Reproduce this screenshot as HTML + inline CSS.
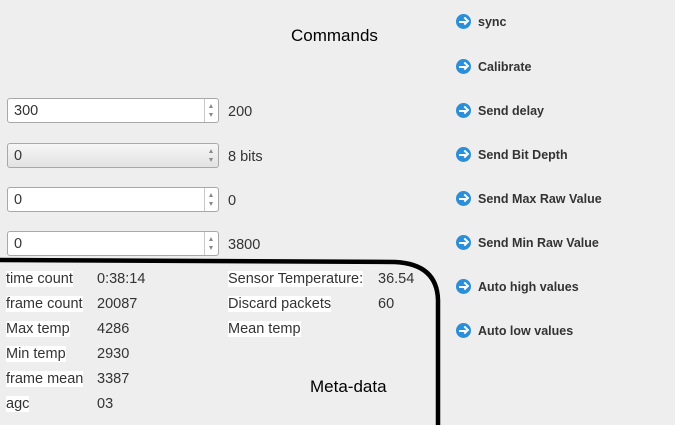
<!DOCTYPE html>
<html><head><style>
body{margin:0;width:675px;height:425px;background:#eeeeee;position:relative;overflow:hidden;font-family:"Liberation Sans","DejaVu Sans",sans-serif;color:#333;}
.a{position:absolute;white-space:nowrap}
.sb{position:absolute;left:7px;width:210px;height:23px;border:1px solid #a8a8a8;border-radius:3px;background:#fff;}
.sb.c{background:linear-gradient(#f6f6f6,#e2e2e2);}
.sb span{position:absolute;left:6px;top:4px;font-size:14.5px;color:#333}
.sb .btn{position:absolute;right:0;top:0;width:13px;height:23px;border-left:1px solid #c8c8c8;}
.sb.c .btn{border-left:none}
.btn:before{content:"";position:absolute;left:4px;top:5px;border:2.5px solid transparent;border-bottom:4px solid #888;border-top:0}
.btn:after{content:"";position:absolute;left:4px;top:14px;border:2.5px solid transparent;border-top:4px solid #888;border-bottom:0}
.v{font-size:14.5px;position:absolute;left:228px}
.r{position:absolute;left:456px;font-size:12.5px;font-weight:bold;color:#333}
.r i{display:inline-block;width:15px;height:15px;border-radius:50%;background:#2a8fd8;vertical-align:middle;position:relative;margin-right:7px;top:-1px}
.r i:before{content:"";position:absolute;left:3px;top:6.5px;width:7px;height:2px;background:#fff}
.r i:after{content:"";position:absolute;left:6px;top:4px;width:4px;height:4px;border-top:2px solid #fff;border-right:2px solid #fff;transform:rotate(45deg)}
.m{position:absolute;font-size:14.5px;white-space:nowrap}
.m b{font-weight:normal;background:#fff}
</style></head><body>
<div class="a" style="left:291px;top:26px;font-size:17px;color:#000">Commands</div>
<div class="sb" style="top:98px"><span>300</span><div class="btn"></div></div><div class="v" style="top:104px">200</div>
<div class="sb c" style="top:143px"><span>0</span><div class="btn"></div></div><div class="v" style="top:149px">8 bits</div>
<div class="sb" style="top:187px"><span>0</span><div class="btn"></div></div><div class="v" style="top:193px">0</div>
<div class="sb" style="top:231px"><span>0</span><div class="btn"></div></div><div class="v" style="top:237px">3800</div>

<div class="r" style="top:15px"><i></i>sync</div>
<div class="r" style="top:60px"><i></i>Calibrate</div>
<div class="r" style="top:104px"><i></i>Send delay</div>
<div class="r" style="top:148px"><i></i>Send Bit Depth</div>
<div class="r" style="top:192px"><i></i>Send Max Raw Value</div>
<div class="r" style="top:236px"><i></i>Send Min Raw Value</div>
<div class="r" style="top:280px"><i></i>Auto high values</div>
<div class="r" style="top:324px"><i></i>Auto low values</div>

<svg class="a" style="left:0;top:0" width="675" height="425"><path d="M0 260 L395 262 Q437 264 438 300 L438 425" fill="none" stroke="#000" stroke-width="4.5"/></svg>

<div class="m" style="left:6px;top:271px"><b>time count</b></div><div class="m" style="left:97px;top:271px">0:38:14</div>
<div class="m" style="left:6px;top:296px"><b>frame count</b></div><div class="m" style="left:97px;top:296px">20087</div>
<div class="m" style="left:6px;top:321px"><b>Max temp</b></div><div class="m" style="left:97px;top:321px">4286</div>
<div class="m" style="left:6px;top:346px"><b>Min temp</b></div><div class="m" style="left:97px;top:346px">2930</div>
<div class="m" style="left:6px;top:371px"><b>frame mean</b></div><div class="m" style="left:97px;top:371px">3387</div>
<div class="m" style="left:6px;top:396px"><b>agc</b></div><div class="m" style="left:97px;top:396px">03</div>
<div class="m" style="left:228px;top:271px"><b>Sensor Temperature:</b></div><div class="m" style="left:378px;top:271px">36.54</div>
<div class="m" style="left:228px;top:296px"><b>Discard packets</b></div><div class="m" style="left:378px;top:296px">60</div>
<div class="m" style="left:228px;top:321px"><b>Mean temp</b></div>
<div class="a" style="left:310px;top:377px;font-size:17px;color:#000">Meta-data</div>
</body></html>
